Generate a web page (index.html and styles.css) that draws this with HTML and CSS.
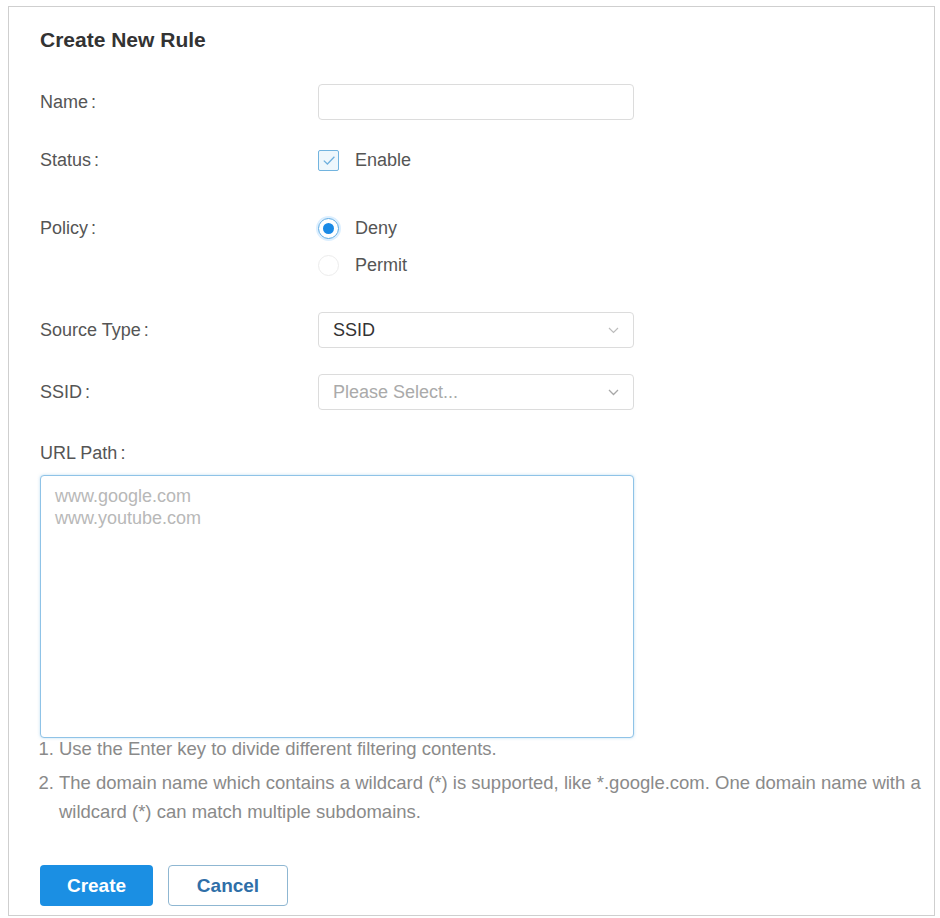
FILE: index.html
```html
<!DOCTYPE html>
<html lang="en">
<head>
    <meta charset="UTF-8">
    <meta name="viewport" content="width=device-width, initial-scale=1.0">
    <title>Create New Rule</title>
    <link rel="stylesheet" href="styles.css">
</head>
<body>
    <div class="panel">
        <h1 class="title">Create New Rule</h1>

        <div class="row row-name">
            <label class="label" for="name">Name<span class="colon">:</span></label>
            <input type="text" id="name" class="field">
        </div>

        <div class="row row-status">
            <span class="label">Status<span class="colon">:</span></span>
            <label class="check">
                <span class="box">
                    <svg width="14" height="11" viewBox="0 0 14 11"><path d="M1.8 5.6 L5.4 9 L12.4 1.8" fill="none" stroke="#6fb0de" stroke-width="1.3"/></svg>
                </span>
                Enable
            </label>
        </div>

        <div class="row row-policy">
            <span class="label">Policy<span class="colon">:</span></span>
            <div class="radios">
                <label class="radio"><span class="dot on"></span>Deny</label>
                <label class="radio"><span class="dot"></span>Permit</label>
            </div>
        </div>

        <div class="row row-source">
            <span class="label">Source Type<span class="colon">:</span></span>
            <div class="field select">
                <span>SSID</span>
                <svg width="11" height="7" viewBox="0 0 11 7"><path d="M1 1 L5.5 5.5 L10 1" fill="none" stroke="#bdbdbd" stroke-width="1.2"/></svg>
            </div>
        </div>

        <div class="row row-ssid">
            <span class="label">SSID<span class="colon">:</span></span>
            <div class="field select">
                <span class="placeholder">Please Select...</span>
                <svg width="11" height="7" viewBox="0 0 11 7"><path d="M1 1 L5.5 5.5 L10 1" fill="none" stroke="#a8a8a8" stroke-width="1.3"/></svg>
            </div>
        </div>

        <div class="url-label">URL Path<span class="colon">:</span></div>
        <textarea class="url-box" placeholder="www.google.com&#10;www.youtube.com"></textarea>

        <ol class="hints">
            <li>Use the Enter key to divide different filtering contents.</li>
            <li>The domain name which contains a wildcard (*) is supported, like *.google.com. One domain name with a wildcard (*) can match multiple subdomains.</li>
        </ol>

        <div class="actions">
            <button type="button" class="btn btn-primary">Create</button>
            <button type="button" class="btn btn-default">Cancel</button>
        </div>
    </div>
</body>
</html>
```

FILE: styles.css
```css
body {
    margin: 0;
    background: #fff;
    font-family: "Liberation Sans", Arial, sans-serif;
    color: #555;
}
.panel {
    box-sizing: border-box;
    width: 927px;
    height: 910px;
    margin: 6px 0 0 8px;
    padding: 0 0 0 31px;
    border: 1px solid #cfcfcf;
}
.title {
    margin: 21px 0 0;
    font-size: 21px;
    line-height: 24px;
    font-weight: bold;
    color: #333;
}
.row {
    display: flex;
    align-items: center;
}
.label {
    width: 278px;
    flex: none;
    font-size: 18px;
    line-height: 24px;
    color: #555;
}
.colon {
    margin-left: 3px;
}
.row-name {
    margin-top: 32px;
}
.row-status {
    margin-top: 22px;
    height: 36px;
}
.row-policy {
    margin-top: 32px;
    align-items: flex-start;
}
.row-policy .label {
    padding-top: 6px;
}
.row-source {
    margin-top: 29px;
}
.row-ssid {
    margin-top: 26px;
}
.field {
    box-sizing: border-box;
    width: 316px;
    height: 36px;
    border: 1px solid #dcdcdc;
    border-radius: 4px;
    font-family: inherit;
    font-size: 18px;
    padding: 0 14px;
    outline: none;
    background: #fff;
}
.select {
    display: flex;
    align-items: center;
    justify-content: space-between;
    color: #333;
}
.placeholder {
    color: #aaa;
}
.check {
    display: flex;
    align-items: center;
    font-size: 18px;
    color: #555;
}
.box {
    box-sizing: border-box;
    width: 21px;
    height: 21px;
    margin-right: 16px;
    border: 1px solid #72b4df;
    border-radius: 2px;
    background: #eef7fc;
    display: flex;
    align-items: center;
    justify-content: center;
}
.radios {
    display: flex;
    flex-direction: column;
}
.radio {
    display: flex;
    align-items: center;
    height: 36px;
    font-size: 18px;
    color: #555;
}
.radio + .radio {
    margin-top: 1px;
}
.dot {
    box-sizing: border-box;
    width: 21px;
    height: 21px;
    margin-right: 16px;
    border: 1px solid #ececec;
    border-radius: 50%;
    position: relative;
}
.dot.on {
    border-color: #5aa9e3;
    box-shadow: 0 0 0 2px #dcefff;
}
.dot.on::after {
    content: "";
    position: absolute;
    left: 4px;
    top: 4px;
    width: 11px;
    height: 11px;
    border-radius: 50%;
    background: #1a8ae6;
}
.url-label {
    margin-top: 31px;
    font-size: 18px;
    line-height: 24px;
    color: #555;
}
.url-box {
    display: block;
    box-sizing: border-box;
    width: 594px;
    height: 263px;
    margin-top: 10px;
    padding: 9px 14px;
    border: 1px solid #8fc3e7;
    border-radius: 4px;
    box-shadow: 0 0 3px rgba(120, 185, 230, 0.5);
    font-family: inherit;
    font-size: 18px;
    line-height: 22px;
    resize: none;
    outline: none;
}
.url-box::placeholder {
    color: #b8b8b8;
}
.hints {
    margin: -4px 0 0;
    padding: 0 0 0 19px;
    font-size: 18.5px;
    line-height: 29px;
    color: #8a8a8a;
}
.hints li + li {
    margin-top: 5px;
}
.actions {
    display: flex;
    gap: 15px;
    margin-top: 39px;
}
.btn {
    height: 41px;
    border-radius: 4px;
    font-family: inherit;
    font-size: 19px;
    font-weight: bold;
    cursor: pointer;
}
.btn-primary {
    width: 113px;
    border: none;
    background: #1b8fe3;
    color: #fff;
}
.btn-default {
    width: 120px;
    border: 1.5px solid #8fb7d2;
    background: #fff;
    color: #2f6fa8;
}
```
